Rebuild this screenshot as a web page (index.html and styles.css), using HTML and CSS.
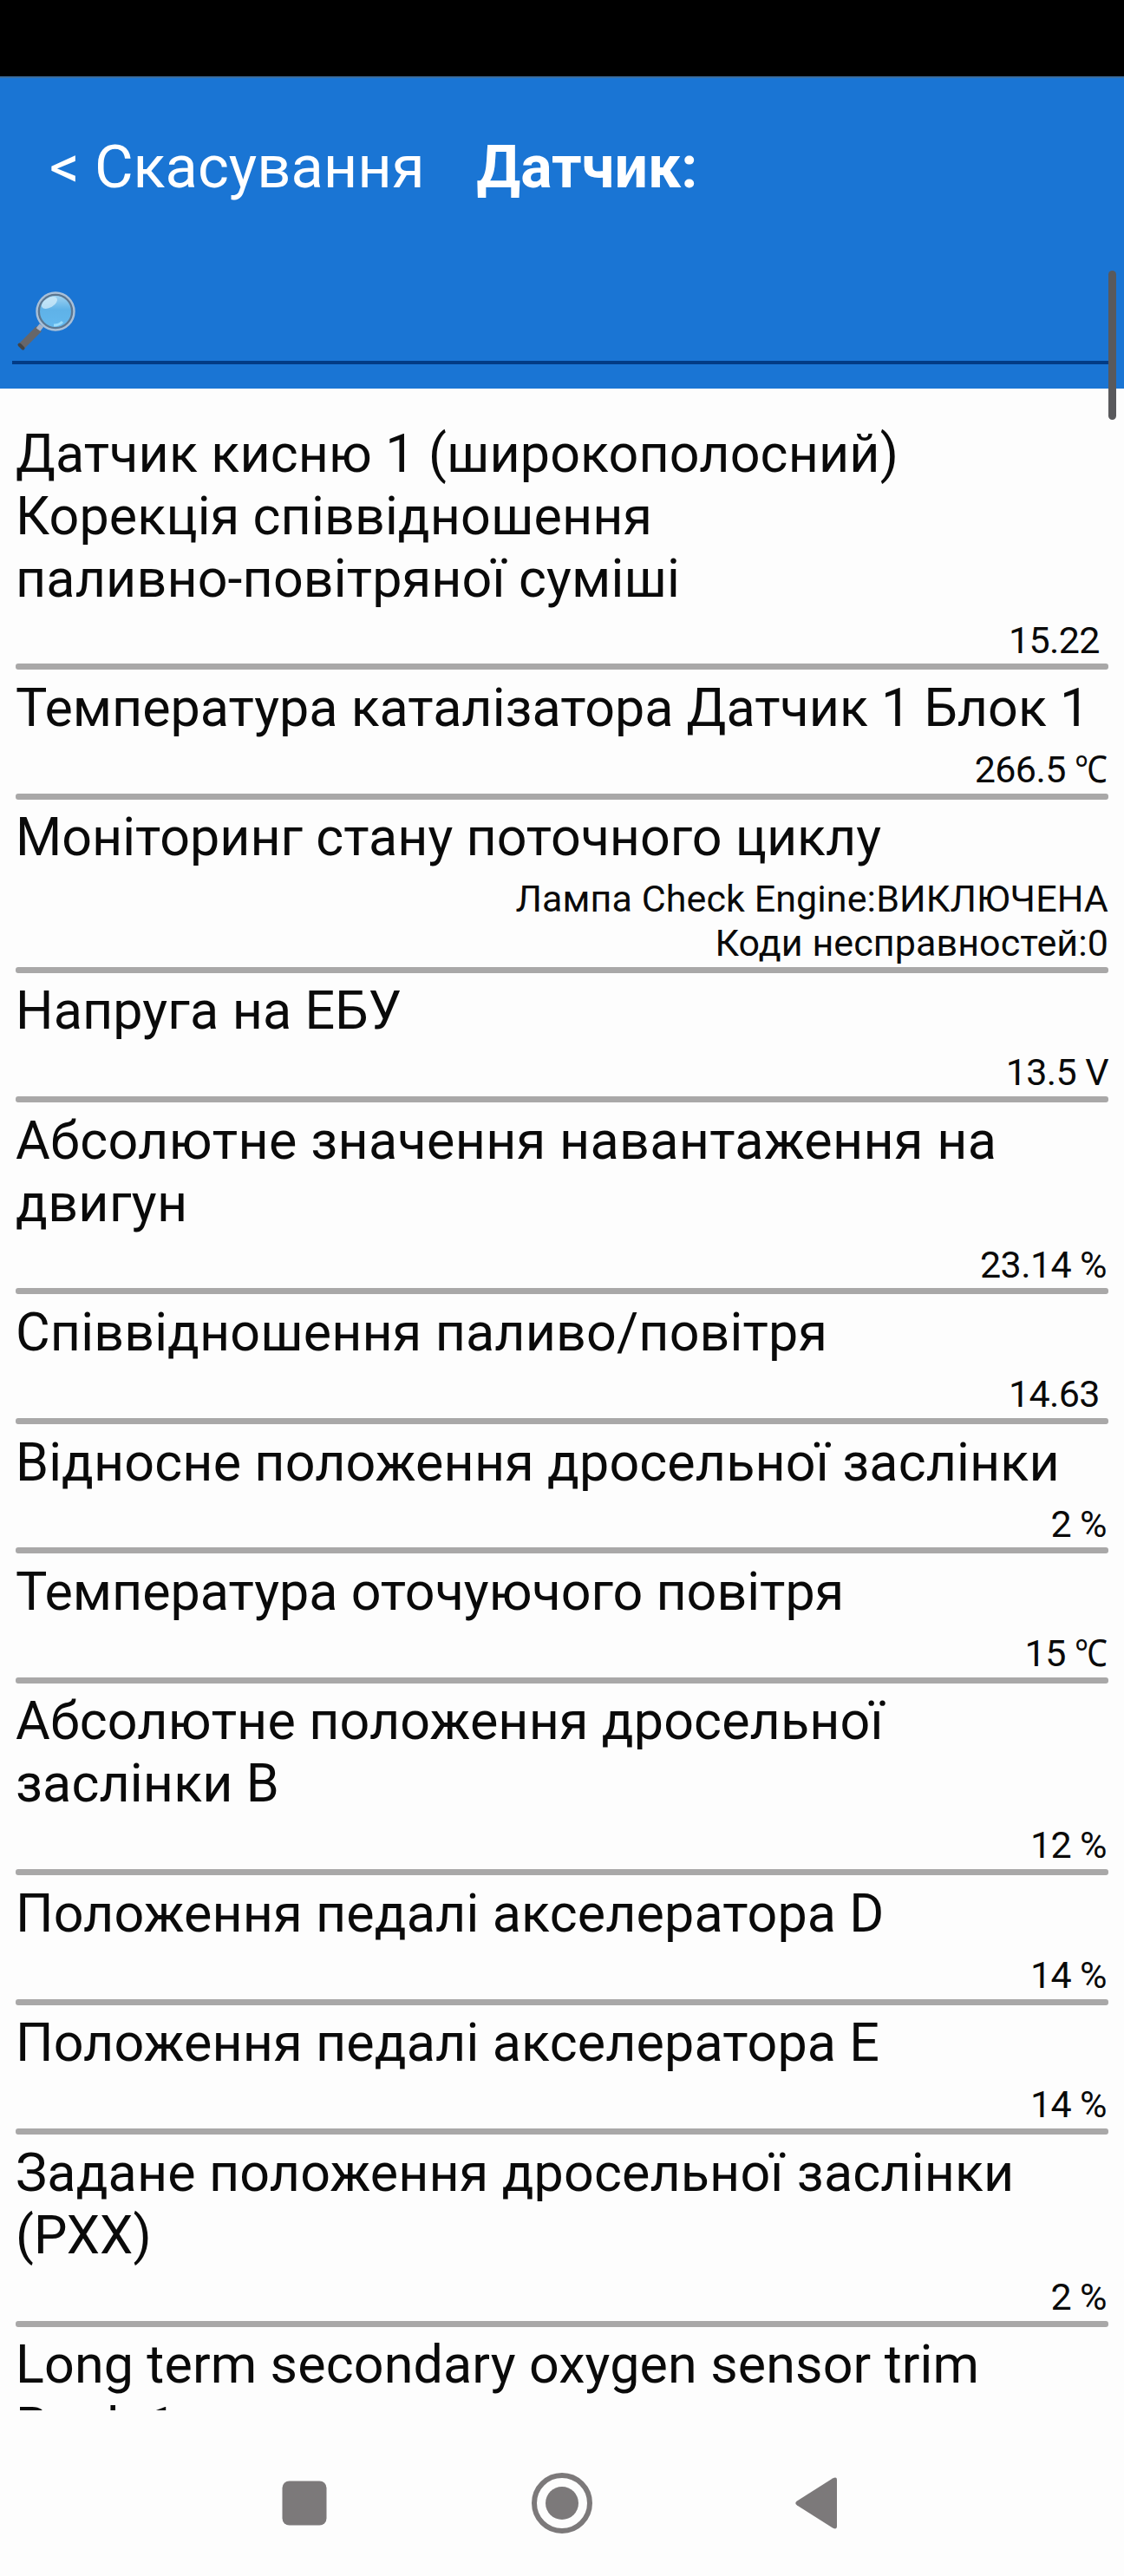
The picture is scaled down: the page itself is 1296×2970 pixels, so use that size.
FILE: index.html
```html
<!DOCTYPE html>
<html lang="uk">
<head>
    <meta charset="UTF-8">
    <meta name="viewport" content="width=device-width, initial-scale=1.0">
    <title>Датчик</title>
    <link rel="stylesheet" href="styles.css">
</head>
<body>
    <div class="status-bar"></div>

    <header class="header">
        <div class="header-top">
            <a class="cancel">&lt; Скасування</a>
            <h1>Датчик:</h1>
        </div>
        <div class="search-box">
            <svg class="search-icon" width="72" height="74" viewBox="0 0 72 74">
                <defs>
                    <linearGradient id="lens" x1="0" y1="0" x2="0" y2="1">
                        <stop offset="0" stop-color="#a5d6f3"/>
                        <stop offset="0.45" stop-color="#5fb2e8"/>
                        <stop offset="1" stop-color="#63b8ee"/>
                    </linearGradient>
                </defs>
                <path d="M26 45 L5 66" stroke="#66666a" stroke-width="8.5"/>
                <path d="M3.5 63.5 L7.5 67.5" stroke="#444" stroke-width="4" stroke-linecap="round"/>
                <path d="M29 41 L25 46" stroke="#a9b4c6" stroke-width="6"/>
                <circle cx="45" cy="25" r="20" fill="url(#lens)" stroke="#5c7791" stroke-width="4"/>
                <circle cx="45" cy="25" r="21.5" fill="none" stroke="#a9c0d8" stroke-width="2.4"/>
                <ellipse cx="38" cy="15" rx="10" ry="5.5" fill="#d3ecfa" opacity="0.75" transform="rotate(-30 38 15)"/>
                <path d="M43 41 Q49 41 53 37" stroke="#9adcfb" stroke-width="3" fill="none"/>
            </svg>
        </div>
        <div class="scrollbar"></div>
    </header>

    <ul class="sensor-list">
        <li>
            <p class="name">Датчик кисню 1 (широкополосний)<br>Корекція співвідношення<br>паливно-повітряної суміші</p>
            <p class="value">15.22&nbsp;</p>
        </li>
        <li>
            <p class="name tight">Температура каталізатора Датчик 1 Блок 1</p>
            <p class="value">266.5 <span class="unit">℃</span></p>
        </li>
        <li>
            <p class="name tight">Моніторинг стану поточного циклу</p>
            <p class="value text">Лампа Check Engine:ВИКЛЮЧЕНА<br>Коди несправностей:0</p>
        </li>
        <li>
            <p class="name">Напруга на ЕБУ</p>
            <p class="value">13.5 V</p>
        </li>
        <li>
            <p class="name wide">Абсолютне значення навантаження на<br>двигун</p>
            <p class="value percent">23.14 %</p>
        </li>
        <li>
            <p class="name">Співвідношення паливо/повітря</p>
            <p class="value">14.63&nbsp;</p>
        </li>
        <li>
            <p class="name">Відносне положення дросельної заслінки</p>
            <p class="value percent">2 %</p>
        </li>
        <li>
            <p class="name tight">Температура оточуючого повітря</p>
            <p class="value">15 <span class="unit">℃</span></p>
        </li>
        <li>
            <p class="name">Абсолютне положення дросельної<br>заслінки B</p>
            <p class="value percent">12 %</p>
        </li>
        <li>
            <p class="name">Положення педалі акселератора D</p>
            <p class="value percent">14 %</p>
        </li>
        <li>
            <p class="name">Положення педалі акселератора E</p>
            <p class="value percent">14 %</p>
        </li>
        <li>
            <p class="name">Задане положення дросельної заслінки<br>(РХХ)</p>
            <p class="value percent">2 %</p>
        </li>
        <li>
            <p class="name">Long term secondary oxygen sensor trim<br>Bank 1</p>
        </li>
    </ul>

    <nav class="nav-bar">
        <svg width="80" height="80" viewBox="0 0 80 80">
            <rect x="14.5" y="14.5" width="51" height="51" rx="8"/>
        </svg>
        <svg width="80" height="80" viewBox="0 0 80 80">
            <circle cx="40" cy="40" r="32" fill="none" stroke="#7c797a" stroke-width="6"/>
            <circle cx="40" cy="40" r="19"/>
        </svg>
        <svg width="80" height="80" viewBox="0 0 80 80">
            <path d="M14 37.5 L55 11.5 Q60 9 60 13 V67 Q60 71 55 68.5 L14 42.5 Q10.5 40 14 37.5 Z"/>
        </svg>
    </nav>
</body>
</html>
```

FILE: styles.css
```css
* {
    margin: 0;
    padding: 0;
    box-sizing: border-box;
}
body {
    display: flex;
    flex-direction: column;
    height: 2970px;
    background: #fdfdfd;
    font-family: Roboto, "Noto Sans", sans-serif;
    color: #0a0a0a;
    overflow: hidden;
}
.status-bar {
    height: 88px;
    flex-shrink: 0;
    background: #000;
}
.header {
    position: relative;
    height: 360px;
    flex-shrink: 0;
    padding: 63px 16px 0 14px;
    background: #1a75d4;
    border-top: 2px solid #3a6d9e;
    color: #fff;
}
.header-top {
    display: flex;
    align-items: baseline;
    gap: 60px;
    padding-left: 43px;
    height: 176px;
    font-size: 68.6px;
    line-height: 80px;
}
.cancel {
    white-space: nowrap;
}
.header h1 {
    font-size: 68px;
    font-weight: 700;
}
.search-box {
    height: 91px;
    padding: 5px 0 0 5px;
    border-bottom: 4px solid #023b85;
}
.search-icon {
    display: block;
}
/* overlaps the header and the top of the list */
.scrollbar {
    position: absolute;
    top: 222px;
    right: 9px;
    width: 9px;
    height: 172px;
    border-radius: 5px;
    background: #59595c;
}
.sensor-list {
    flex: 1;
    min-height: 0;
    padding: 31px 18px 0;
    margin-bottom: 12px;
    list-style: none;
    overflow: hidden;
}
.sensor-list li {
    padding-top: 7.6px;
}
.sensor-list li::after {
    content: "";
    display: block;
    height: 7px;
    margin-top: 2.55px;
    border-radius: 3px;
    background: #a9a8a8;
}
.name {
    font-size: 61px;
    line-height: 72px;
    letter-spacing: 0.13px;
    white-space: nowrap;
}
.name.tight {
    letter-spacing: 0;
}
.name.wide {
    letter-spacing: 0.33px;
}
.value {
    margin-top: 10px;
    font-size: 43px;
    line-height: 50.3px;
    letter-spacing: -0.6px;
    text-align: right;
}
.value.text {
    letter-spacing: 0.1px;
}
.value.percent {
    padding-right: 2px;
}
.unit {
    display: inline-block;
    margin: 0 2px 0 -5px;
    transform: scaleX(0.88);
    transform-origin: right;
}
.nav-bar {
    display: flex;
    justify-content: center;
    align-items: center;
    gap: 217px;
    height: 179px;
    flex-shrink: 0;
    padding-top: 10px;
}
.nav-bar svg {
    fill: #7c797a;
}
```
